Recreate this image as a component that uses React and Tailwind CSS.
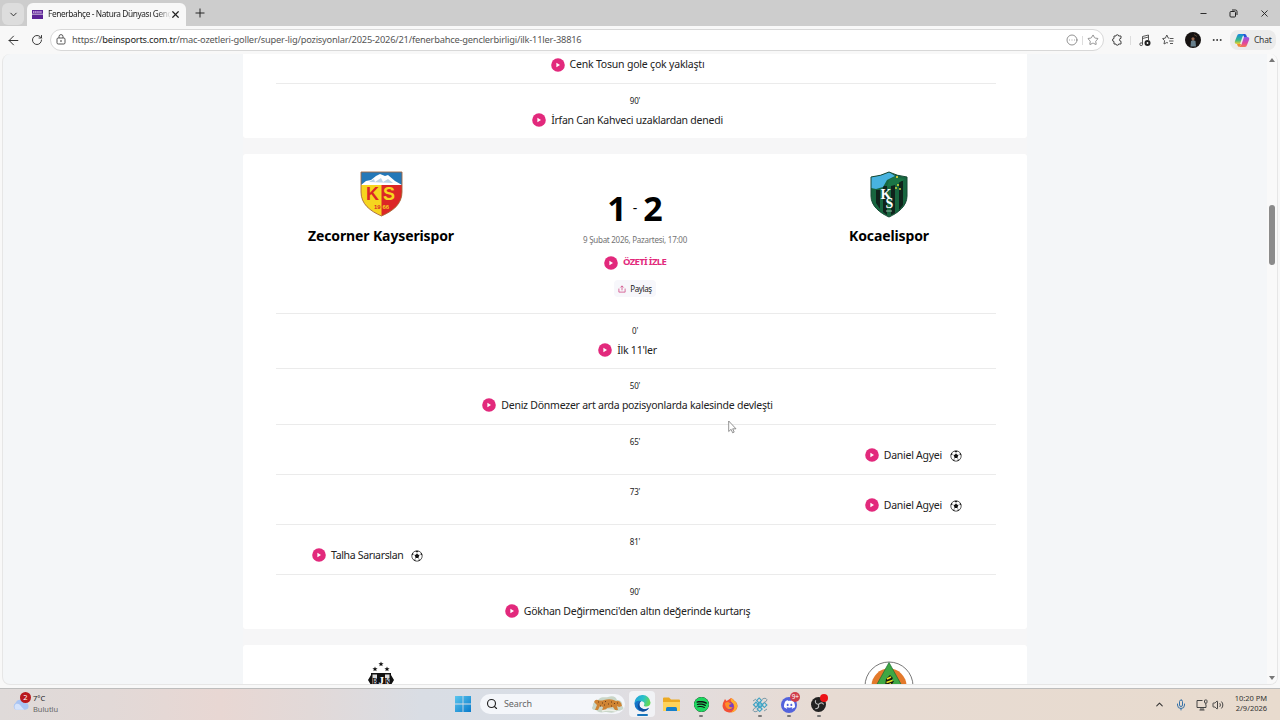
import React from 'react'
import {
  ArrowLeft,
  ChevronDown,
  ChevronUp,
  CircleEllipsis,
  Ellipsis,
  Mic,
  Minus,
  Plus,
  RotateCw,
  Search,
  Star,
  Volume2,
  X,
} from 'lucide-react'
import { SiSpotify, SiDiscord } from 'react-icons/si'

const events = [
  { minute: "0'", text: "İlk 11'ler", side: 'center' },
  { minute: "50'", text: 'Deniz Dönmezer art arda pozisyonlarda kalesinde devleşti', side: 'center' },
  { minute: "65'", text: 'Daniel Agyei', side: 'right' },
  { minute: "73'", text: 'Daniel Agyei', side: 'right' },
  { minute: "81'", text: 'Talha Sarıarslan', side: 'left' },
  { minute: "90'", text: "Gökhan Değirmenci'den altın değerinde kurtarış", side: 'center' },
]

const PlayIcon = () => (
  <svg viewBox="0 0 14 14" className="w-[14px] h-[14px] shrink-0">
    <circle cx="7" cy="7" r="6.8" fill="#e2297c" />
    <path d="M5.4 4.8v4.4L9 7z" fill="#fff" />
  </svg>
)

const BallIcon = () => (
  <svg viewBox="0 0 12 12" className="w-3 h-3 shrink-0 mt-[3px]">
    <circle cx="6" cy="6" r="5.2" fill="#fff" stroke="#333" strokeWidth=".8" />
    <path d="M6 3.7l2.2 1.6-.8 2.6H4.6l-.8-2.6z" fill="#111" />
    <path d="M4.2 1.2L6 2.2l1.8-1L6 .7zM.8 5.5l1.3-1.3.2-1.7L.9 4zM11.2 5.5L9.9 4.2l-.2-1.7L11.1 4zM2.2 9.6l1.8.2.8 1.3-1.6-.5zM9.8 9.6L8 9.8l-.8 1.3 1.6-.5z" fill="#111" />
    <path d="M6 3.7V2.2M8.2 5.3l1.7-1M7.4 7.9l.8 1.9M4.6 7.9L4 9.8M3.8 5.3l-1.7-1" stroke="#444" strokeWidth=".5" />
  </svg>
)

const KayseriLogo = () => (
  <svg viewBox="0 0 43 46" className="w-[43px] h-[46px]">
    <path d="M1 1h41v20c0 12-9 19-20.500 24C10 40 1 33 1 21z" fill="#f6d51f" />
    <path d="M21.500 12H42v9c0 12-9 19-20.500 24z" fill="#dc2626" />
    <path d="M1 1h41v13H1z" fill="#2478b8" />
    <path d="M1 14l5-4 5-1 5-4 4-2 5 2 3-1 7 6 7 4z" fill="#fff" />
    <path d="M9 11l5-3 1 3 6-4 2 4 5-3 5 4z" fill="#b9d3e6" />
    <path d="M1 1h41v20c0 12-9 19-20.500 24C10 40 1 33 1 21z" fill="none" stroke="#a5673e" strokeWidth=".9" />
    <text x="6" y="29" fontSize="18" fontWeight="800" fontFamily="Liberation Sans" fill="#dc2626">K</text>
    <text x="23" y="29" fontSize="18" fontWeight="800" fontFamily="Liberation Sans" fill="#f6d51f">S</text>
    <text x="14" y="38" fontSize="6" fontWeight="700" fontFamily="Liberation Sans" fill="#dc2626">19</text>
    <text x="22.500" y="38" fontSize="6" fontWeight="700" fontFamily="Liberation Sans" fill="#f6d51f">66</text>
  </svg>
)

const KocaeliLogo = () => (
  <svg viewBox="0 0 38 47" className="w-[38px] h-[47px]">
    <path d="M1 6Q11 5 19 1q8 4 18 5v19c0 10-9 17-18 21C10 42 1 35 1 25z" fill="#17663f" />
    <path d="M6 19h4v19l-4-6zM13 15h4v29l-4-3zM21 12h4v30l-4 2zM29 10h4v24l-4 5z" fill="#10231c" />
    <path d="M1 6Q11 5 19 1l6 4-8 4-4 7-7 2-5-1z" fill="#48b3df" />
    <path d="M24 6l11 2-10 6-8 2 2-7z" fill="#1b7546" />
    <circle cx="27" cy="6" r="1.100" fill="#f2df39" />
    <circle cx="28" cy="14" r="1" fill="#d8df3a" />
    <circle cx="26" cy="17" r=".9" fill="#d8df3a" />
    <circle cx="30" cy="18" r=".9" fill="#d8df3a" />
    <text x="10.500" y="28" fontSize="14" fontWeight="700" fontFamily="Liberation Serif" fill="#fff">K</text>
    <text x="15.500" y="37" fontSize="14" fontWeight="700" fontFamily="Liberation Serif" fill="#fff">S</text>
    <path d="M16 40h6" stroke="#8fb8a2" strokeWidth="1.200" />
    <path d="M1 6Q11 5 19 1q8 4 18 5v19c0 10-9 17-18 21C10 42 1 35 1 25z" fill="none" stroke="#164734" />
  </svg>
)

const BesiktasLogo = () => (
  <svg viewBox="0 0 30 26" className="w-[30px] h-[26px]">
    <path d="M15 .5l.7 1.700 1.900.1-1.500 1.200.5 1.800-1.600-1-1.600 1 .5-1.800L12.400 2.300l1.900-.1zM9 5.500l.7 1.700 1.900.1-1.500 1.200.5 1.800-1.600-1-1.600 1 .5-1.800-1.500-1.200 1.900-.1zM21 5.500l.7 1.700 1.900.1-1.500 1.200.5 1.800-1.600-1-1.600 1 .5-1.800-1.500-1.200 1.900-.1z" fill="#111" />
    <path d="M2 19l3-5v-2h20v2l3 5-3 5v2H5v-2z" fill="#111" />
    <path d="M6.500 13.500h4.500V25H6.500zM19 13.500h4.500V25H19z" fill="#ddd" />
    <text x="6.200" y="22.500" fontSize="8" fontWeight="700" fontFamily="Liberation Serif" fill="#111">B</text>
    <text x="12.500" y="23" fontSize="11" fontWeight="700" fontFamily="Liberation Serif" fill="#fff">J</text>
    <text x="18.500" y="22.500" fontSize="8" fontWeight="700" fontFamily="Liberation Serif" fill="#111">K</text>
  </svg>
)

const AlanyaLogo = () => (
  <svg viewBox="0 0 50 25" className="w-[50px] h-[25px]">
    <circle cx="25" cy="25" r="24" fill="#fff" stroke="#555" strokeWidth=".8" />
    <circle cx="25" cy="25" r="17.500" fill="#e3792b" />
    <path d="M25 1.500L38 25H12z" fill="#3da744" stroke="#1b6b30" strokeWidth=".7" />
    <path d="M21 25l1-7 4-4 3 3-2 3h3l-3 5z" fill="#151a10" />
    <path d="M23 18l4-2M22.500 21.500l6-2M24 24.500l3-2" stroke="#f3df22" strokeWidth="1.500" />
  </svg>
)

const EventRow = ({ minute, text, side }) => (
  <div className={`-mr-[2px] pr-[2px] border-t border-[#ebebeb] ${side === 'center' ? 'h-[55.4px]' : 'h-[50px]'}`}>
    <p className="h-[13px] mt-[10px] text-center text-[8px] leading-[13px] tracking-[-0.2px]">{minute}</p>
    <div
      className={`flex items-center gap-[5px] h-5 text-[10.5px] leading-5 ${
        side === 'center'
          ? 'justify-center mt-[3px] pr-[15px] tracking-[-0.24px]'
          : side === 'right'
          ? 'justify-end pr-[32px] -mt-[3px] tracking-[-0.25px]'
          : 'pl-9 -mt-[3px] tracking-[-0.33px]'
      }`}
    >
      <PlayIcon />
      <span className="whitespace-nowrap">{text}</span>
      {side !== 'center' && (
        <span className="pl-[3px]">
          <BallIcon />
        </span>
      )}
    </div>
  </div>
)

const Team = ({ logo, name }) => (
  <div className="w-[210px] pt-[17px] flex flex-col items-center">
    <div className="h-[47px]">{logo}</div>
    <h2 className="mt-[8px] text-[14px] leading-5 font-bold text-black tracking-[-0.12px] whitespace-nowrap">{name}</h2>
  </div>
)

const MatchCard = () => (
  <section className="h-[475px] px-[33px] bg-white rounded-[3px]">
    <div className="flex justify-between h-[159px]">
      <Team logo={<KayseriLogo />} name="Zecorner Kayserispor" />
      <div className="flex flex-col items-center pt-[36px]">
        <div className="flex items-center h-9 gap-[6px] text-[34px] leading-9 font-bold text-black">
          <span>1</span>
          <span className="text-[14px] font-normal">-</span>
          <span>2</span>
        </div>
        <p className="mt-[7px] text-[8px] leading-[13px] tracking-[-0.26px] text-[#737373]">9 Şubat 2026, Pazartesi, 17:00</p>
        <div className="flex items-center gap-[5px] mt-[9px] h-[15px] text-[9.5px] font-bold tracking-[-0.65px] text-[#e2297c]">
          <PlayIcon />
          <span>ÖZETİ İZLE</span>
        </div>
        <button className="flex items-center gap-1 mt-[10px] px-1 h-[17px] rounded-sm bg-[#f7f7fb] text-[8px] tracking-[-0.38px]">
          <svg viewBox="0 0 9 9" className="w-[8px] h-[8px]" fill="none" stroke="#d14b85" strokeWidth=".9">
            <path d="M1 4v4h7V4M4.500 6V1M2.700 2.800L4.500 1l1.800 1.800" />
          </svg>
          <span>Paylaş</span>
        </button>
      </div>
      <Team logo={<KocaeliLogo />} name="Kocaelispor" />
    </div>
    {events.map((event, i) => (
      <EventRow key={i} {...event} />
    ))}
  </section>
)

const TitleBar = () => (
  <div className="flex h-[26px] bg-[#cdcdcd] text-[#222]">
    <div className="flex items-center justify-center w-[22px] h-[22px] mt-[3px] ml-[2px] rounded-md bg-[#dddddd]">
      <ChevronDown size={11} strokeWidth={2} />
    </div>
    <div className="flex items-center w-[159px] h-[23px] mt-[3px] ml-[3px] pl-[5px] rounded-t-md bg-[#f8f8f8]">
      <svg viewBox="0 0 11 9" className="w-[11px] h-[9px] shrink-0">
        <path d="M0 0h11v9H0z" fill="#5c2396" />
        <path d="M1 2h9" stroke="#d9b8ed" strokeWidth="1.300" strokeDasharray="1.500 .6" />
        <path d="M0 4.200h11" stroke="#eee" strokeWidth=".8" />
      </svg>
      <span className="ml-[5px] w-[123px] overflow-hidden whitespace-nowrap text-[8.3px] tracking-[-0.38px] [mask-image:linear-gradient(to_right,black_88%,transparent)]">
        Fenerbahçe - Natura Dünyası Genç
      </span>
      <X size={11} strokeWidth={2.600} className="shrink-0 -ml-[1px]" />
    </div>
    <Plus size={14} strokeWidth={1.700} className="mt-[6px] ml-[7px]" />
    <div className="flex items-center ml-auto pr-[10px] gap-[21px]">
      <Minus size={9} strokeWidth={2.500} />
      <svg viewBox="0 0 9 9" className="w-[9px] h-[9px]" fill="none" stroke="#222">
        <rect x="1" y="2.500" width="5.500" height="5.500" rx="1" />
        <path d="M3 1h3.500Q8 1 8 2.500V6" />
      </svg>
      <X size={11} strokeWidth={2} />
    </div>
  </div>
)

const CopilotIcon = () => (
  <svg viewBox="0 0 16 15" className="w-4 h-[15px]">
    <defs>
      <linearGradient id="cpA" x1="0" y1="0" x2="0" y2="1">
        <stop offset="0" stopColor="#1688df" />
        <stop offset=".6" stopColor="#35b98a" />
        <stop offset="1" stopColor="#f0cf2c" />
      </linearGradient>
      <linearGradient id="cpB" x1="0" y1="0" x2="0" y2="1">
        <stop offset="0" stopColor="#8e58ed" />
        <stop offset=".6" stopColor="#e2469b" />
        <stop offset="1" stopColor="#f57c52" />
      </linearGradient>
    </defs>
    <path d="M5 1h6L8.500 3.500 6 11H3Q0 11 1 8l2-5Q3.500 1 5 1z" fill="url(#cpA)" />
    <path d="M11 14H5l2.500-2.500L10 4h3q3 0 2 3l-2 5q-.5 2-2 2z" fill="url(#cpB)" />
    <path d="M9 1h2q1.200 0 2 3h-3z" fill="#2456d6" />
    <path d="M3 11h3l1.500.5L5 14Q3.500 13.500 3 11z" fill="#f28a31" />
  </svg>
)

const AddressBar = () => (
  <div className="flex items-center h-[28px] text-[#333] bg-[#f8f8f8]">
    <ArrowLeft size={15} strokeWidth={1.600} className="ml-[6px]" />
    <RotateCw size={12} strokeWidth={1.900} className="ml-[10px]" />
    <div className="flex items-center w-[1054px] h-[22px] ml-[7px] pl-[5px] pr-[4px] rounded-full bg-white border border-[#d8d8d8]">
      <svg viewBox="0 0 10 11" className="w-[10px] h-[11px] -mt-[1px]" fill="none" stroke="#444" strokeWidth=".9">
        <rect x="1" y="4" width="8" height="6" rx="1.200" />
        <path d="M3 4V2.600a2 2 0 0 1 4 0V4" />
        <circle cx="5" cy="7" r=".4" fill="#444" />
      </svg>
      <span className="ml-[6px] text-[9.3px] tracking-[-0.21px] text-[#555] whitespace-nowrap">
        https://<span className="text-[#222]">beinsports.com.tr</span>/mac-ozetleri-goller/super-lig/pozisyonlar/2025-2026/21/fenerbahce-genclerbirligi/ilk-11ler-38816
      </span>
      <CircleEllipsis size={12} strokeWidth={1.600} className="ml-auto text-[#777]" />
      <span className="w-px h-[9px] mx-[4px] bg-[#ddd]" />
      <Star size={12} strokeWidth={1.600} className="text-[#777]" />
    </div>
    <svg viewBox="0 0 12 12" className="w-3 h-3 ml-[7px]" fill="none" stroke="#444">
      <path d="M3 2h2a1.300 1.300 0 0 1 2.600 0H10v2.300a1.500 1.500 0 0 0 0 3V10H7.600a1.300 1.300 0 0 1-2.600 0H3V7.500a1.400 1.400 0 0 1 0-3z" strokeLinejoin="round" />
    </svg>
    <span className="w-px h-[9px] ml-[7px] bg-[#ddd]" />
    <svg viewBox="0 0 12 13" className="w-3 h-[13px] ml-[8px]" fill="none" stroke="#444" strokeWidth=".9">
      <path d="M3.500 10V2.500L9.500 1v5M3.500 4.500l6-1.500" />
      <circle cx="2.200" cy="10.200" r="1.400" />
      <circle cx="8.500" cy="9" r="3" fill="#222" stroke="none" />
      <circle cx="8.500" cy="9" r=".9" fill="#fff" stroke="none" />
    </svg>
    <svg viewBox="0 0 12 12" className="w-3 h-3 ml-[11px]" fill="none" stroke="#444" strokeWidth=".9">
      <path d="M7.500 4.300L6.300 4.100 4.800 1 3.400 4.100.6 4.600l2 2.100L2 10l2.800-1.500L6 9M8 4.500h3.500M7 7h4.500M8 9.500h3" strokeLinejoin="round" />
    </svg>
    <svg viewBox="0 0 16 16" className="w-4 h-4 ml-[11px]">
      <circle cx="8" cy="8" r="8" fill="#171312" />
      <path d="M5.500 14.500l.5-5.500 2-1 2.500 1 .5 5.500z" fill="#68808d" />
      <circle cx="8" cy="6.800" r="1.600" fill="#9b6b52" />
      <path d="M9 2.500l3 2" stroke="#54432f" />
    </svg>
    <Ellipsis size={12} strokeWidth={2} className="ml-[10px]" />
    <div className="flex items-center w-[46px] h-[20px] ml-[7px] pl-1 gap-1 rounded-lg bg-[#ebebeb] text-[8.5px] tracking-[-0.25px]">
      <CopilotIcon />
      <span>Chat</span>
    </div>
  </div>
)

const EdgeIcon = () => (
  <svg viewBox="0 0 18 18" className="w-[17px] h-[17px]">
    <defs>
      <linearGradient id="edgeTop" x1="0" y1="0" x2="1" y2=".3">
        <stop offset="0" stopColor="#1f9de0" />
        <stop offset=".6" stopColor="#2cc2c6" />
        <stop offset="1" stopColor="#62d957" />
      </linearGradient>
    </defs>
    <path d="M.5 9A8.500 8.500 0 0 1 17.500 8c0 3-2 4.300-4.500 4.300-2 0-3-.8-2.400-1.600 1.200-2-.3-4.200-3-4.200C4 6.500 1.500 8 .5 9z" fill="url(#edgeTop)" />
    <path d="M.5 9c1-2.500 4-3.800 7-2.500C5 8 5 12.500 8.500 14.300c2.500 1.300 5.500.7 7.500-.8-1.500 2.600-4.200 4-7 4A8.500 8.500 0 0 1 .5 9z" fill="#1474c8" />
    <path d="M7.500 6.500C5 8 5 12.500 8.500 14.300c2.500 1.300 5.500.7 7.500-.8-1.200 2-3.300 3.500-5.500 3.900C6 17.500 3.500 14 4 11c.3-2.300 1.800-4 3.500-4.500z" fill="#104f9d" />
  </svg>
)

const TaskIcon = ({ children, running }) => (
  <div className="flex flex-col items-center w-[29.4px] h-7 pt-[5px]">
    <div className="relative flex items-center justify-center h-[17px]">{children}</div>
    <div className="flex items-end h-[4px]">{running && <span className="w-[4px] h-[2px] rounded bg-[#777]" />}</div>
  </div>
)

const Taskbar = () => (
  <footer className="flex h-8 pt-[2px] border-t border-[#bdbdbd] bg-[linear-gradient(to_right,#dfdad9_0px,#e2d9d7_110px,#e8d7d3_220px,#e2d9d8_310px,#d9dde4_420px,#d9dee6_560px,#e2dddf_660px,#e7dbd3_820px,#e8dbce_1280px)]">
    <div className="flex w-[453px] pl-3">
      <div className="relative w-[19px] h-7">
        <svg viewBox="0 0 18 12" className="absolute left-0 top-[7px] w-[17px] h-3">
          <path d="M4 12a4 4 0 0 1-.3-7A5.500 5.500 0 0 1 14 5a3.500 3.500 0 0 1 0 7z" fill="#a9c4f3" />
          <path d="M4 12a4 4 0 0 1 0-6c3-1 5 1 6 3l3 3z" fill="#d5e3fb" />
        </svg>
        <span className="absolute left-[8px] top-[1px] flex items-center justify-center w-[11px] h-[11px] rounded-full bg-[#b9171c] text-white text-[7.500px]">2</span>
      </div>
      <div className="ml-[2px] mt-[2px] text-[7.5px] leading-[10.5px] tracking-[-0.05px] text-[#222]">
        <p>7°C</p>
        <p className="text-[#666]">Bulutlu</p>
      </div>
    </div>
    <svg viewBox="0 0 16 16" className="w-4 h-4 mt-[5px] ml-[2px]">
      <defs>
        <linearGradient id="win" x1="0" y1="0" x2="1" y2="1">
          <stop offset="0" stopColor="#5bc6ee" />
          <stop offset="1" stopColor="#087acb" />
        </linearGradient>
      </defs>
      <path d="M0 0h7.600v7.600H0zM8.400 0H16v7.600H8.400zM0 8.400h7.600V16H0zM8.400 8.400H16V16H8.400z" fill="url(#win)" />
    </svg>
    <div className="flex items-center w-[145px] h-[20px] mt-[3px] ml-[9px] pl-[6px] rounded-full bg-[#f4f6fa] text-[#666]">
      <Search size={12} strokeWidth={2.300} className="text-[#222]" />
      <span className="ml-[6px] text-[9px] tracking-[-0.1px]">Search</span>
      <svg viewBox="0 0 34 19" className="w-[34px] h-[19px] ml-auto">
        <path d="M2 11C1 7 6 6 8 4c3-3 7-1 9-2 5-2 8 0 9 3 4 0 6 3 5 6 4 3-1 5-5 5-4 3-9 1-12 1-5 1-7 0-9-2-4 0-5-2-3-4z" fill="#c9d6c9" />
        <path d="M3 7q1-3 4-2 3 1 6 0 7-2 12 1 3-1 5 2l1 3-3 1-2-1 1 4h-3l-2-3-6 1-2 3h-3l1-4-3-1-2 4H4l2-5z" fill="#cf8433" />
        <path d="M7 7h1M11 8h1M14 6.500h1M17 9h1M20 7h1M23 8.500h1M13 10h1M26 8h1M9 11h1M20 11h1" stroke="#673b18" strokeWidth="1.200" />
        <path d="M11 16q6-2 14 0" stroke="#eef1ea" strokeWidth="1.500" fill="none" />
      </svg>
    </div>
    <div className="flex ml-[4px]">
      <div className="flex flex-col items-center w-[26px] h-[26px] mr-[2px] pt-[4px] rounded bg-[#f1f2f5]">
        <EdgeIcon />
        <span className="w-[11px] h-[2px] mt-[2px] rounded bg-[#1673bb]" />
      </div>
      <TaskIcon>
        <svg viewBox="0 0 17 15" className="w-[17px] h-[15px]">
          <path d="M0 1.500Q0 .5 1 .5h5l2 2h8q1 0 1 1V13H0z" fill="#eca922" />
          <path d="M0 5h17v9H0z" fill="#ffd259" />
          <path d="M3 14v-2.500q0-1.500 1.500-1.500h8q1.500 0 1.500 1.500V14z" fill="#1680cb" />
        </svg>
      </TaskIcon>
      <TaskIcon running>
        <SiSpotify size={15} className="text-[#1ed760] bg-[#111] rounded-full" />
      </TaskIcon>
      <TaskIcon>
        <svg viewBox="0 0 16 16" className="w-4 h-4">
          <path d="M2 4l1-2 1.500 2L7 2.500 9 1c2 1 3 2 3.500 3L14 5q3 4 0 8-3 3-7 2.500Q1 14.500.5 9 .5 6 2 4z" fill="#f34f35" />
          <path d="M9 1c3 2 3 3 5 4 3 5 0 10-5 10.500 4-3 4-6 2-8.500C9 4.500 8 3 9 1z" fill="#ffb02e" />
          <circle cx="8" cy="9" r="3.700" fill="#7542c9" />
          <path d="M3 6q3-2 5 0l2 1q-3 0-3 2 1 2 4 1-2 3-5 2-3-2-3-6z" fill="#ff8d28" />
        </svg>
      </TaskIcon>
      <TaskIcon running>
        <svg viewBox="0 0 16 16" className="w-4 h-4" fill="none" stroke="#3fa3c4" strokeWidth="1.200">
          <rect x="5.500" y="2" width="3.500" height="3.500" transform="rotate(45 7.500 3.500)" />
          <rect x="6" y="6" width="4" height="4" transform="rotate(45 8 8)" fill="#7cc4d8" />
          <rect x="2" y="6" width="3.500" height="3.500" transform="rotate(45 4 8)" />
          <rect x="10.500" y="6" width="3.500" height="3.500" transform="rotate(45 12 8)" />
          <rect x="6" y="10.500" width="3.500" height="3.500" transform="rotate(45 8 12)" />
          <path d="M10 2.500q2-2 4-1t0 3l-2 1M6 13.500q-2 2-4 1t0-3l2-1M1 4l3-2M12 14l3-2" stroke="#7c9ba8" strokeWidth="1" />
        </svg>
      </TaskIcon>
      <TaskIcon running>
        <span className="flex items-center justify-center w-4 h-4 rounded-full bg-[#5363dc]">
          <SiDiscord size={11} className="text-white" />
        </span>
        <span className="absolute left-[9px] -top-[4px] flex items-center justify-center w-[10px] h-[10px] rounded-full bg-[#d03d49] text-white text-[6.500px] tracking-[-0.3px]">9+</span>
      </TaskIcon>
      <TaskIcon running>
        <svg viewBox="0 0 16 16" className="w-[15px] h-[15px]">
          <circle cx="8" cy="8" r="8" fill="#222" />
          <path d="M8 8Q3.500 7 5 3.500M8 8q3.500-3.500 5.500 0M8 8q1 4.500-3.500 4.500" stroke="#bbb" strokeWidth="1.200" fill="none" />
        </svg>
        <span className="absolute left-[9px] -top-[2px] w-[8px] h-[8px] rounded-full bg-[#ec1216]" />
      </TaskIcon>
    </div>
    <div className="flex items-center ml-auto h-[27px] pr-[13px] text-[#333]">
      <ChevronUp size={11} strokeWidth={2.200} />
      <Mic size={12} strokeWidth={2} className="ml-[10px] text-[#3772a8]" />
      <svg viewBox="0 0 12 12" className="w-3 h-3 ml-[9px]" fill="none" stroke="#444">
        <path d="M6.500 1.500H1v7h9V6M3.500 11h5M5 8.500V11M7 8.500V11" />
        <rect x="8.500" y="1" width="2.500" height="3" rx=".6" />
        <path d="M9.800 4v2" />
      </svg>
      <Volume2 size={12} strokeWidth={1.800} className="ml-[4px]" />
      <div className="w-[43px] -mt-[3px] text-right text-[7.5px] leading-[10.5px] tracking-[-0.02px] whitespace-nowrap">
        <p>10:20 PM</p>
        <p>2/9/2026</p>
      </div>
    </div>
  </footer>
)

const App = () => {
  return (
    <div className="relative w-[1280px] h-[720px] overflow-hidden flex flex-col bg-[#f8f8f8] text-[#222] font-['Noto_Sans',sans-serif]">
      <TitleBar />
      <AddressBar />

      {/* Web page */}
      <div className="flex h-[631px] mx-[2px] border-x border-b border-[#e6e6e6] rounded-lg overflow-hidden bg-[#f4f6f8]">
        <main className="w-[784px] ml-[240px] bg-[#f6f6f7]">
          <section className="h-[84px] px-[33px] bg-white rounded-b-[3px]">
            <div className="flex items-center justify-center gap-[5px] h-[22px] mb-[7px] pr-[15px] text-[10.5px] tracking-[-0.2px]">
              <PlayIcon />
              <span>Cenk Tosun gole çok yaklaştı</span>
            </div>
            <EventRow minute="90'" text="İrfan Can Kahveci uzaklardan denedi" side="center" />
          </section>
          <div className="h-4" />
          <MatchCard />
          <div className="h-4" />
          <section className="flex justify-between h-[50px] px-[33px] pt-4 bg-white rounded-t-[3px]">
            <div className="flex justify-center w-[210px]"><BesiktasLogo /></div>
            <div className="flex justify-center w-[210px]"><AlanyaLogo /></div>
          </section>
        </main>
        <div className="flex flex-col items-center w-[10px] ml-auto py-[4px] bg-[#f9f9f9]">
          <span className="w-0 h-0 border-x-[3px] border-x-transparent border-b-[4px] border-b-[#777]" />
          <span className="w-[6px] h-[60px] mt-[143px] rounded-full bg-[#8b8b8b]" />
          <span className="w-0 h-0 mt-auto border-x-[3px] border-x-transparent border-t-[4px] border-t-[#777]" />
        </div>
      </div>
      <div className="h-[3px] shrink-0" />
      <Taskbar />

      {/* Mouse pointer */}
      <svg viewBox="0 0 9 14" className="absolute left-[728px] top-[420px] w-[9px] h-[14px]">
        <path d="M.7 1v10.500l2.400-2.200 1.500 3.500 1.600-.7-1.500-3.300H8z" fill="#fff" stroke="#777" strokeWidth=".8" />
      </svg>
    </div>
  )
}

export default App
